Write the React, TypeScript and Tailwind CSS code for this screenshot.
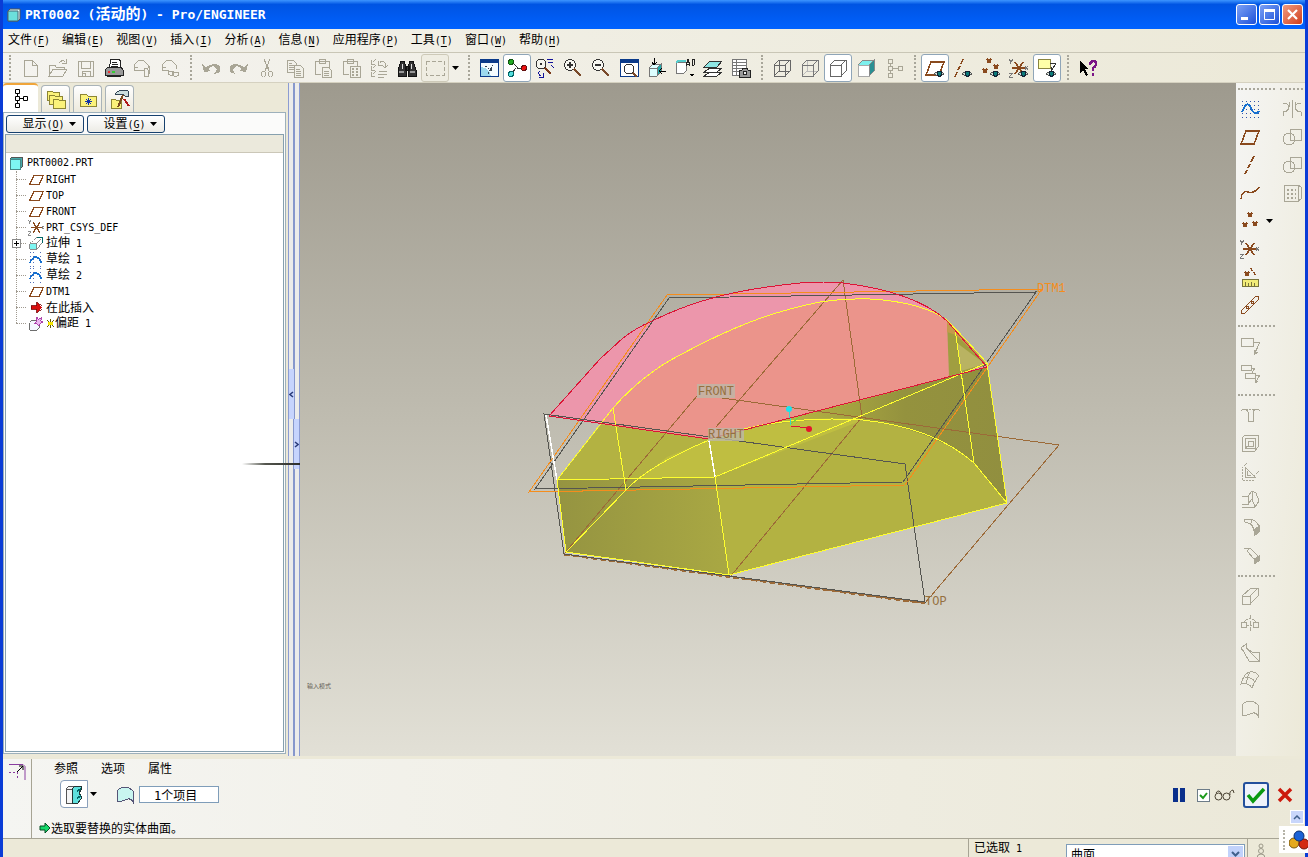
import type { ReactNode } from "react";

const G = "#a9a696";
const BR = "#8a4a1e";

// Latin characters are set half as wide as the Chinese ones
function Txt({ children }: { children: string }) {
    return (
        <>
            {children.split(/([\x20-\x7e]+)/).filter(Boolean).map((part, i) =>
                /^[\x20-\x7e]+$/.test(part) ? (
                    <span key={i} className="whitespace-pre font-['DejaVu_Sans_Mono',monospace] text-[10px]">{part}</span>
                ) : (
                    <span key={i}>{part}</span>
                )
            )}
        </>
    );
}

function Hot({ k }: { k: string }) {
    return (
        <span className="font-['DejaVu_Sans_Mono',monospace] text-[10px]">
            (<span className="underline underline-offset-2">{k}</span>)
        </span>
    );
}

function Ic({ children, c = G, fill = "none" }: { children: ReactNode; c?: string; fill?: string }) {
    return (
        <svg viewBox="0 0 20 20" className="size-5 shrink-0" fill={fill} stroke={c} strokeWidth="1" shapeRendering="crispEdges" aria-hidden="true">
            {children}
        </svg>
    );
}

function Eye() {
    return (
        <g>
            <path d="M9 16q5-5 10 0q-5 4-10 0z" fill="#d8e4dc" stroke="#555" />
            <circle cx="14.500" cy="15.800" r="2.500" fill="#0b7a78" stroke="#123" />
        </g>
    );
}

const Down = () => (
    <svg viewBox="0 0 7 4" className="h-1 w-[7px] shrink-0" aria-hidden="true"><path d="M0 0h7L3.500 4z" fill="#000" /></svg>
);

const CubeLines = ({ back }: { back?: ReactNode }) => (
    <>
        {back}
        <path d="M2 7h11v11H2zM2 7l5-5h11v11l-5 5M13 7l5-5" />
    </>
);

const fileTools = [
    { n: "新建", i: <Ic><path d="M4 2h8l5 5v11H4zM12 2v5h5" /></Ic> },
    { n: "打开", i: <Ic><path d="M1 18V7h6l1 2h8v2M1 18l4-7h14l-4 7zM11 5q3-4 6-1M18 1v4h-4" /></Ic> },
    { n: "保存", i: <Ic><path d="M2 3h15v15H2zM5 3v7h9V3M6 18v-5h8v5M6 15h3v3H6z" /></Ic> },
    { n: "打印", i: <Ic c="#222"><path d="M7 1h8l2 3-1 7H5z" fill="#fff" /><path d="M8 4h5M8 6h6M7 8h7" /><path d="M1 12l3-3h13l2 3v5H1z" fill="#999" /><path d="M4 14h2" stroke="#e33" strokeWidth="2" /><path d="M8 14h3" stroke="#3c3" strokeWidth="2" /><path d="M3 18h14" /></Ic> },
    { n: "附加到邮件", i: <Ic><path d="M2 12V7l5-5h4l5 5v3M2 12h10M2 9h4M17 8v8q0 3-3 3q-2 0-2-3v-4q0-2 2-2t2 2v5" /></Ic> },
    { n: "发送链接", i: <Ic><path d="M2 12V7l5-5h4l5 5v4M2 12h7M2 9h4" /><rect x="8" y="13" width="6" height="4" rx="2" /><rect x="12" y="14" width="7" height="4" rx="2" /></Ic> },
];

const editTools = [
    { n: "撤消", i: <Ic c="none" fill={G}><path d="M1 6l2 8 7-1-3-2q5-5 8-1q2 3-2 6q8-1 6-7q-4-6-14 0z" /></Ic> },
    { n: "重做", i: <Ic c="none" fill={G}><path d="M19 6l-2 8-7-1 3-2q-5-5-8-1q-2 3 2 6q-8-1-6-7q4-6 14 0z" /></Ic> },
    { n: "剪切", i: <Ic><path d="M7 1l5 12M13 1L8 13M11 9l1 3" /><ellipse cx="6.500" cy="16" rx="2" ry="3" /><ellipse cx="13.500" cy="16" rx="2" ry="3" /></Ic> },
    { n: "复制", i: <Ic><path d="M2 2h6l3 3v9H2zM4 5h3M4 7h5M4 9h5M4 11h5" /><path d="M9 7h6l3 3v9H9z" fill="#f1f0e8" /><path d="M11 11h4M11 13h5M11 15h5M11 17h5" /></Ic> },
    { n: "粘贴", i: <Ic><path d="M2 3h14v7M2 3v13h6M6 1h6v4H6z" /><path d="M9 9h6l3 3v7H9z" fill="#f1f0e8" /><path d="M11 13h5M11 15h5M11 17h5" /></Ic> },
    { n: "选择性粘贴", i: <Ic><path d="M2 3h14v5M2 3v13h6M6 1h6v4H6z" /><path d="M9 8h10v11H9z" fill="#f1f0e8" /><path d="M11 11h2M15 11h2M11 14h2M15 14h2M11 17h2M15 17h2" strokeWidth="2" /></Ic> },
    { n: "再生", i: <Ic><path d="M2 2v4h4M2 8v4h4M2 14v4h4M4 4l3-3M4 10l3-3M4 16l3-3M10 13h8M9 16h9M9 19h6M11 5q2-4 5 0v4M13 7l3 3 3-3M9 3v4h4" /></Ic> },
    { n: "查找", i: <Ic c="#111" fill="#333"><path d="M4 3h3l2 6v9H1v-6zM13 3h3l3 9v6h-8V9zM8 8h4v4H8z" /><path d="M5 6v5M14 6v5" stroke="#ddd" /><path d="M2 14h5M13 14h5" stroke="#999" strokeWidth="2" /></Ic> },
    { n: "选取框", box: true, i: <Ic><path d="M1 3h18v14H1z" strokeDasharray="4 2" /></Ic> },
];

const viewTools = [
    { n: "重画", i: <Ic c="#0a3a8a"><path d="M1 1h18v17H1z" fill="#f4fbff" /><path d="M1 3h18" strokeWidth="4" /><path d="M2 9q8 1 10 9H2z" fill="#9dd9ee" stroke="none" /><path d="M6 8l8 5M9 16l5-9" stroke="#345" strokeDasharray="2 1" /></Ic> },
    { n: "旋转中心", on: true, i: <Ic c="#333"><path d="M5 4l5 5v1h7M9 10l-4 5" /><circle cx="4" cy="4" r="2.500" fill="#2a2" stroke="#151" /><circle cx="17" cy="10" r="2.500" fill="#e11" stroke="#611" /><circle cx="4" cy="16" r="2.500" fill="#5dd" stroke="#066" /></Ic> },
    { n: "定向模式", i: <Ic c="#333"><circle cx="6" cy="6" r="5" fill="#f6f6ee" /><path d="M10 10l6 6" stroke="#7a3a1a" strokeWidth="2" /><path d="M6 5v2" strokeWidth="2" /><path d="M12 1h6M13 4h5M5 13q-3 3 1 5M4 19h4v-4M16 7l3 3" stroke="#119" /></Ic> },
    { n: "放大", i: <Ic c="#333"><circle cx="7" cy="7" r="5.500" fill="#f8f8f2" /><path d="M4 7h6M7 4v6" strokeWidth="2" /><path d="M11 11l7 7" stroke="#7a4a2a" strokeWidth="2" /></Ic> },
    { n: "缩小", i: <Ic c="#333"><circle cx="7" cy="7" r="5.500" fill="#f8f8f2" /><path d="M4 7h6" strokeWidth="2" /><path d="M11 11l7 7" stroke="#7a4a2a" strokeWidth="2" /></Ic> },
    { n: "重新调整", i: <Ic c="#0a3a8a"><path d="M1 1h18v17H1z" fill="#fff" /><path d="M1 3h18" strokeWidth="4" /><circle cx="10" cy="11" r="5" stroke="#333" fill="#fff" /><path d="M14 15l4 4" stroke="#7a4a2a" strokeWidth="2" /></Ic> },
    { n: "重定向视图", i: <Ic c="#777"><path d="M2 10l4-4h8v8l-4 4H2z" fill="#dff" /><path d="M10 10l4-4v8l-4 4z" fill="#2aa" /><path d="M2 10h8v8" /><path d="M7 0v6M5 4l2 3 3-3M19 13h-6M15 10l-3 3 3 3" stroke="#000" /></Ic> },
    { n: "视图列表", i: <Ic c="#777"><path d="M1 6l2-2h8v9l-2 2H1z" fill="#fff" /><path d="M1 5l2-2h8" stroke="#5cc" strokeWidth="2" /><path d="M11 8l2-7 2 7M12 6h2M17 1v6h2q2-1 0-3q2-1 0-3h-2" stroke="#222" /><path d="M14 16h5l-2 3z" fill="#000" stroke="none" /></Ic> },
    { n: "图层", i: <Ic c="#333"><path d="M1 18l6-4h12l-5 4zM1 14l6-4h12l-5 4z" fill="#fff" /><path d="M1 9l6-6h12l-5 6z" fill="#8ee6e4" /></Ic> },
    { n: "视图管理器", i: <Ic c="#777"><path d="M1 1h14v16H1z" fill="#fff" /><path d="M1 4h14M1 7h14M1 10h14M1 13h14M5 1v16" /><path d="M8 12h3l1-2h4l1 2h2v7H8z" fill="#999" stroke="#222" /><circle cx="14" cy="15" r="2" fill="#eee" stroke="#222" /></Ic> },
];

const displayTools = [
    { n: "线框", i: <Ic c="#666"><CubeLines back={<path d="M7 2v11h11M2 18l5-5" />} /></Ic> },
    { n: "隐藏线", i: <Ic c="#777"><CubeLines back={<path d="M7 2v11h11M2 18l5-5" stroke="#bbb" />} /></Ic> },
    { n: "消隐", on: true, i: <Ic c="#666"><CubeLines /></Ic> },
    { n: "着色", i: <Ic c="#888"><path d="M2 7l5-5h11v11l-5 5H2z" fill="#7df0ee" /><path d="M2 7h11v11H2z" fill="#fff" stroke="#aaa" /><path d="M13 7l5-5v11l-5 5z" fill="#2a8f92" /></Ic> },
    { n: "模型树", i: <Ic><path d="M4 1h4v4H4zM4 8h4v4H4zM4 15h4v4H4zM14 8h4v4h-4zM6 5v3M6 12v3M8 10h6" /></Ic> },
];

const Plane = () => <path d="M1 17L6 4h13l-5 13z" stroke={BR} strokeWidth="1.500" />;
const XXX = () => <path d="M6 1l4 4M10 1L6 5M2 11l4 4M6 11l-4 4M13 7l4 4M17 7l-4 4" stroke={BR} strokeWidth="1.500" />;
const Csys = () => (
    <>
        <path d="M3 10h13M6 4l8 12M14 4L6 16" stroke={BR} strokeWidth="1.500" />
        <path d="M0 1l2 3M4 1L1 6M0 15h4l-4 4h4M16 8l3 4M19 8l-3 4" stroke="#777" />
    </>
);

const datumTools = [
    { n: "基准平面显示", on: true, i: <Ic><Plane /><Eye /></Ic> },
    { n: "基准轴显示", i: <Ic><path d="M10 1L8 6M7 8l-2 4M4 14l-2 5" stroke={BR} strokeWidth="1.500" /><Eye /></Ic> },
    { n: "基准点显示", i: <Ic><XXX /><Eye /></Ic> },
    { n: "坐标系显示", i: <Ic><Csys /><Eye /></Ic> },
    { n: "注释显示", on: true, i: <Ic><path d="M1 1h12v9H1z" fill="#ffffa8" stroke="#8a8540" /><path d="M13 5h6l-4 7M14 9v4h3" stroke="#333" /><Eye /></Ic> },
];

const helpTools = [
    { n: "上下文帮助", i: <Ic><path d="M2 3v12l3-3 3 6 2-1-3-6h4z" fill="#000" stroke="none" /><path d="M12 7q0-4 3-4q4 0 3 4q-1 2-3 3v3M15 15v3" stroke="#7b1586" strokeWidth="2.500" /></Ic> },
];

type Tool = { n: string; i: ReactNode; on?: boolean; box?: boolean };

function ToolGroup({ tools }: { tools: Tool[] }) {
    return (
        <div className="flex">
            {tools.map((t) => (
                <button
                    key={t.n}
                    type="button"
                    aria-label={t.n}
                    className={
                        "flex size-7 items-center justify-center rounded-[3px] border " +
                        (t.on ? "border-[#8fa5b8] bg-white" : t.box ? "border-[#cdc9b8] bg-[#efede2]" : "border-transparent")
                    }
                >
                    {t.i}
                </button>
            ))}
        </div>
    );
}

const Grip = () => (
    <div className="flex w-[13px] shrink-0 justify-center">
        <div className="h-[25px] border-l-2 border-dotted border-[#a8a69a]" />
    </div>
);

const menus = [
    ["文件", "F"], ["编辑", "E"], ["视图", "V"], ["插入", "I"], ["分析", "A"],
    ["信息", "N"], ["应用程序", "P"], ["工具", "T"], ["窗口", "W"], ["帮助", "H"],
];

const TreePlane = () => <Ic><path d="M2 16L7 5h11l-5 11z" stroke={BR} strokeWidth="1.500" /></Ic>;
const TreeSketch = () => (
    <Ic>
        <path d="M2 2h15M2 6h15M2 10h15M2 14h15M2 18h15" stroke="#3355aa" strokeDasharray="1 3" />
        <path d="M2 14q7-14 14 0" stroke="#1670d0" strokeWidth="1.800" />
    </Ic>
);

const tree = [
    { t: "RIGHT", i: <TreePlane /> },
    { t: "TOP", i: <TreePlane /> },
    { t: "FRONT", i: <TreePlane /> },
    { t: "PRT_CSYS_DEF", i: <Ic><Csys /></Ic> },
    { t: "拉伸 1", plus: true, i: <Ic c="#777"><path d="M2 10h8v7H2z" fill="#7df5f2" /><path d="M2 10l8-7M10 17l7-8M10 10l5-5" strokeDasharray="2 1" /><path d="M11 3h6v6" stroke="#066" strokeWidth="1.500" /></Ic> },
    { t: "草绘 1", i: <TreeSketch /> },
    { t: "草绘 2", i: <TreeSketch /> },
    { t: "DTM1", i: <TreePlane /> },
    { t: "在此插入", i: <Ic><path d="M4 8h6V4l7 6-7 6v-4H4z" fill="#d80f0f" stroke="#7a0808" /></Ic> },
    { t: "偏距 1", star: true, i: <Ic c="#555"><path d="M2 9l3-3h8v9l-3 3H2z" fill="#f4f6ff" /><path d="M10 2l2 3 4-2-1 4 3 1-4 2-1 3-2-3-3 0 2-3z" fill="#e9b6f0" stroke="#a0289c" /></Ic> },
];

const sideMain: Tool[][] = [
    [
        { n: "草绘", i: <Ic><path d="M2 2h17M2 6h17M2 10h17M2 14h17M2 18h17" stroke="#3355aa" strokeDasharray="1 3" /><path d="M2 13q5-13 9-4t8 3" stroke="#1670d0" strokeWidth="1.800" /></Ic> },
        { n: "平面", i: <Ic><Plane /></Ic> },
        { n: "轴", i: <Ic><path d="M14 1l-3 6M10 9l-2 4M7 15l-2 4" stroke={BR} strokeWidth="1.500" /></Ic> },
        { n: "曲线", i: <Ic><path d="M1 16q1-9 7-7t11-5" stroke={BR} strokeWidth="1.500" /></Ic> },
        { n: "点", i: <Ic><path d="M8 2l4 4M12 2L8 6M3 12l4 4M7 12l-4 4M13 11l4 4M17 11l-4 4" stroke={BR} strokeWidth="1.500" /></Ic> },
        { n: "坐标系", i: <Ic><Csys /></Ic> },
        { n: "分析特征", i: <Ic><path d="M5 5l4 4M9 5L5 9M11 1l1 3M14 5l1 3" stroke={BR} strokeWidth="1.500" /><path d="M2 12h16v7H2z" fill="#f2ec78" stroke="#77743a" /><path d="M5 15v4M8 16v3M11 15v4M14 16v3" stroke="#77743a" /></Ic> },
        { n: "参照", i: <Ic c={BR}><ellipse cx="15" cy="5" rx="5" ry="2.500" transform="rotate(-45 15 5)" /><ellipse cx="10" cy="10" rx="5" ry="2.500" transform="rotate(-45 10 10)" /><ellipse cx="5" cy="15" rx="5" ry="2.500" transform="rotate(-45 5 15)" /></Ic> },
    ],
    [
        { n: "注释", i: <Ic><path d="M1 2h12v8H1zM13 6h7l-6 13M14 14v5l4-3" /></Ic> },
        { n: "注释特征", i: <Ic><path d="M1 1h10v5H1zM5 9h10v5H5zM11 4h4l-3 5M15 11h5l-5 8M15 15v4l3-2" /></Ic> },
    ],
    [
        { n: "孔", i: <Ic><path d="M1 6l2-2h3l2 3v9h5V7l2-3h3l2 2" /><path d="M6 4h10" strokeDasharray="2 1" /></Ic> },
        { n: "壳", i: <Ic><path d="M2 5l3-3h13v12l-3 4H2zM2 5h1M5 5h10v10H5zM8 8h5v5H8zM5 15l3-2" /></Ic> },
        { n: "筋", i: <Ic><path d="M5 6v10h10zM7 10v4h4" /><path d="M2 8v11h13M2 7l5-5M14 15l5-5" strokeDasharray="2 1" /></Ic> },
        { n: "拔模", i: <Ic><path d="M2 7h6v8H2M8 7l4-5 4 2 3 8-4 6H2M12 2v8l3 8M8 15l4-5" /></Ic> },
        { n: "倒圆角", i: <Ic><path d="M4 2h7q7 2 8 9M4 2q0 4 4 4q5 1 6 8M8 2q4 0 4 4" /><path d="M14 13l5-4v6l-5 4z" fill={G} /></Ic> },
        { n: "倒角", i: <Ic><path d="M4 3h6l9 9M7 6l7 8M4 3h4M10 3l-3 3" /><path d="M14 14l5-3v5l-5 3z" fill={G} /></Ic> },
    ],
    [
        { n: "拉伸", i: <Ic><path d="M2 10h8v8H2zM2 10l9-8h7v8l-8 8M10 10l8-8" /></Ic> },
        { n: "旋转", i: <Ic><circle cx="4" cy="11" r="3" /><circle cx="16" cy="11" r="3" /><path d="M10 1v18" strokeDasharray="4 2" /><path d="M4 8q6-7 12 0M7 11h6" strokeDasharray="2 1" /></Ic> },
        { n: "可变剖面扫描", i: <Ic><path d="M1 6l5-4v4l6 4h7v9H9L4 10zM1 6l3 4M6 6l13 13" /></Ic> },
        { n: "边界混合", i: <Ic><path d="M1 14q3-11 9-12 5-1 9 4-4 4-7 12-4-6-11-4zM5 8q6-2 10 4M10 2q-4 6-3 12" /></Ic> },
        { n: "造型", i: <Ic><path d="M2 18V7q8-8 16 0v11q-3-5-8-2-4 2-8 2z" /></Ic> },
    ],
];

const sideMore: Tool[] = [
    { n: "镜像", i: <Ic><path d="M10 1v18" /><path d="M7 3v5q-1 5-6 5v4M13 3v5q1 5 6 5v4M1 4q5 0 6 4M19 4q-5 0-6 4" /></Ic> },
    { n: "合并", i: <Ic><circle cx="7" cy="12" r="6" /><path d="M8 2h11v11H8z" /></Ic> },
    { n: "修剪", i: <Ic><circle cx="7" cy="12" r="6" /><path d="M8 2h11v11H8z" /></Ic> },
    { n: "阵列", i: <Ic><path d="M2 2h14v16H2zM16 2l3 2v12l-3 2" /><path d="M5 7h9M5 11h9M5 15h9" strokeWidth="2" strokeDasharray="2 2" /></Ic> },
];

const SideGrip = () => (
    <div className="flex h-[13px] items-center px-0.5">
        <div className="w-full border-t-2 border-dotted border-[#a9a79b]" />
    </div>
);

function Scene() {
    return (
        <svg viewBox="300 83 936 673" className="absolute inset-0 size-full" fill="none" aria-label="模型">
            <defs>
                <linearGradient id="left" x1="0" x2="1"><stop offset="0" stopColor="#959441" /><stop offset="1" stopColor="#a9a843" /></linearGradient>
                <linearGradient id="back" x1="0" x2="1"><stop offset="0" stopColor="#b8b643" /><stop offset=".55" stopColor="#94923e" /><stop offset="1" stopColor="#918f3f" /></linearGradient>
            </defs>

            {/* solid body */}
            <path d="M557 480L614 408 709 439 987 367 1007 503 729 575 566 552z" fill="#b3b242" />
            <path d="M780 422Q830 415 863 420C915 427 950 443 974 463L1007 503 987 367z" fill="url(#back)" />
            <path d="M715 477L626 490 667 457 709 440Q780 416 863 420z" fill="#bfbe41" />
            <path d="M557 480L715 477 729 575 566 552z" fill="url(#left)" />

            {/* picked surface */}
            <path d="M549 416L600 359 623 338Q636 328 650 322C690 302 730 290 800 283Q825 281 843 283C885 288 925 300 947 321L967 344 987 367 709 439z" fill="#ec96ab" />
            <path d="M600 424L613 408Q643 374 680 355C730 328 770 312 820 302Q845 298 870 299C905 301 930 308 947 320L949 377 709 439z" fill="#eb948b" />
            <path d="M947 321L967 341 987 365 949 377z" fill="#a09e40" />
            <path d="M947 321L967 341 987 365 956 335 947 332z" fill="#c59a4c" />
            <path d="M957 343L985 364 961 371z" fill="#b9b362" />

            <g shapeRendering="crispEdges">
                <path d="M564 554L697 396M722 398L1059 445 925 603 564 554M716 427L843 280 862 417 730 577M729 575L715 477" stroke="#9c6a38" />
                <path d="M544 414L905 464 925 602 564 554zM535 489L669 298 1036 292 903 482z" stroke="#555550" />
                <path d="M564 555L925 604" stroke="#9c6a38" strokeDasharray="6 3" />
                <path d="M529 492L667 295 1042 289 905 485z" stroke="#f58d1c" />
                <path d="M546 415L557 480M709 440L715 477" stroke="#fff" strokeWidth="1.500" />
                <g stroke="#ffff2e">
                    <path d="M557 480L613 408Q643 374 680 355C730 328 770 312 820 302Q845 298 870 299C905 301 930 308 947 320L967 341 987 363 1007 503 729 575 566 552z" />
                    <path d="M557 480L715 477 987 363M715 477L729 575M613 408L626 490M955 329L974 463" />
                    <path d="M566 552L626 490Q648 466 709 440C750 424 800 416 863 420 910 425 948 440 974 463L1007 503" />
                </g>
                <path d="M549 416L600 359 623 338Q636 328 650 322C690 302 730 290 800 283Q825 281 843 283C885 288 925 300 947 321L967 344 987 367 709 439z" stroke="#dc1436" />

                {/* spin centre */}
                <path d="M789 410L791 425" stroke="#3fd8c8" />
                <path d="M791 424L800 416" stroke="#6cdc3c" />
                <path d="M791 426L808 428" stroke="#dc1436" />
            </g>
            <circle cx="789" cy="409" r="3" fill="#19e4ee" />
            <circle cx="809" cy="429" r="3" fill="#e5142e" />

            <path d="M697 384h38v14h-38zM708 428h36v13h-36z" fill="#bdb8a8" fillOpacity=".8" />
            <g fontFamily="Liberation Mono, monospace" fontSize="12" fill="#95703f">
                <text x="698" y="395">FRONT</text>
                <text x="708" y="438">RIGHT</text>
                <text x="925" y="605">TOP</text>
                <text x="1037" y="292" fill="#f58d1c">DTM1</text>
            </g>
            <text x="307" y="688" fontFamily="Noto Sans CJK SC, sans-serif" fontSize="6" fill="#5f5d54">输入模式</text>
        </svg>
    );
}

function TitleBar() {
    return (
        <header className="flex h-[29px] shrink-0 items-center gap-1 bg-linear-to-b from-[#3d95ff] via-[#0054e3] via-15% to-[#0062ff] pr-0.5 pl-1 text-white">
            <svg viewBox="0 0 14 14" className="size-3.5 shrink-0" aria-hidden="true">
                <path d="M1 3l2-2h10v10l-2 2H1z" fill="#dff" stroke="#555" />
                <path d="M1 3h10v10H1z" fill="#6be0dc" stroke="#467" />
            </svg>
            <h1 className="flex-1 whitespace-pre font-['DejaVu_Sans_Mono','Noto_Sans_CJK_SC',monospace] text-[13px] leading-4 font-bold">
                PRT0002 (<span className="text-[15px]">活动的</span>) - Pro/ENGINEER
            </h1>
            <div className="flex gap-0.5">
                <button type="button" aria-label="最小化" className="flex size-[21px] rounded-[3px] border border-white bg-linear-to-br from-[#7ca0f5] to-[#1c4fd8]">
                    <svg viewBox="0 0 19 19" aria-hidden="true"><path d="M4 12h7v3H4z" fill="#fff" /></svg>
                </button>
                <button type="button" aria-label="最大化" className="flex size-[21px] rounded-[3px] border border-white bg-linear-to-br from-[#7ca0f5] to-[#1c4fd8]">
                    <svg viewBox="0 0 19 19" aria-hidden="true"><path d="M4.500 5.500h10v9h-10z" fill="none" stroke="#fff" /><path d="M4 4h11v3H4z" fill="#fff" /></svg>
                </button>
                <button type="button" aria-label="关闭" className="flex size-[21px] rounded-[3px] border border-white bg-linear-to-br from-[#f09a80] to-[#cf3a12]">
                    <svg viewBox="0 0 19 19" aria-hidden="true"><path d="M5 5l9 9M14 5l-9 9" stroke="#fff" strokeWidth="2.200" /></svg>
                </button>
            </div>
        </header>
    );
}

const Folder = ({ d = "M2 5h6l2 2h8v10H2z" }: { d?: string }) => <path d={d} fill="#fbf27a" stroke="#8c8534" />;

const navTabs = [
    { n: "文件夹浏览器", i: <Ic><Folder d="M1 2h5l1 1h6v8H1z" /><Folder d="M3 6h5l1 1h7v8H3z" /><Folder d="M7 10h5l1 1h6v8H7z" /></Ic> },
    { n: "收藏夹", i: <Ic><Folder /><path d="M10 9v7M7 12h7M8 10l5 5M13 10l-5 5" stroke="#1133aa" /></Ic> },
    { n: "连接", i: <Ic><Folder d="M1 10h4l1 1h5v8H1z" /><path d="M5 5q3-5 13-3v5h-3l-2-2-6 1z" fill="#cdd" stroke="#345" /><path d="M13 6L8 18" stroke="#7a4a1e" strokeWidth="2" /><path d="M14 10l5 7" stroke="#b01818" strokeWidth="2" /></Ic> },
];

function Navigator() {
    return (
        <aside className="flex w-[285px] shrink-0 flex-col pr-0.5">
            <div className="flex h-[29px] items-end gap-[3px]">
                <button type="button" aria-label="模型树" className="flex h-full w-[35px] items-center justify-center rounded-t border-t-2 border-[#f0a53a] bg-white">
                    <svg viewBox="0 0 20 20" className="size-5" fill="none" stroke="#000" aria-hidden="true">
                        <path d="M4.500 .5h4v4h-4zM4.500 7.500h4v4h-4zM4.500 14.500h4v4h-4zM12.500 7.500h4v4h-4zM6.500 5v2M6.500 12v2M9 9.500h3" />
                    </svg>
                </button>
                {navTabs.map((t) => (
                    <button key={t.n} type="button" aria-label={t.n} className="flex h-[27px] w-[29px] items-center justify-center rounded-t border border-b-0 border-[#a9b3b8] bg-linear-to-b from-white to-[#ece9dc]">
                        {t.i}
                    </button>
                ))}
            </div>
            <div className="mb-0.5 flex flex-1 flex-col border border-[#9db0bb] bg-[#fbfbfa] p-px">
                <div className="flex gap-[3px] pt-px pb-px pl-px">
                    {[["显示", "O"], ["设置", "G"]].map(([t, k]) => (
                        <button key={t} type="button" className="flex h-[18px] w-[78px] items-center justify-center gap-1 rounded-[3px] border border-[#17416e] bg-linear-to-b from-white to-[#ecebe5] pl-2 leading-4">
                            <span>{t}<Hot k={k} /></span>
                            <Down />
                        </button>
                    ))}
                </div>
                <div className="flex flex-1 flex-col border border-[#86a0ae] bg-white">
                    <div className="mb-0.5 h-[18px] border-b border-[#cbc7b8] bg-[#ebe9dc]" />
                    <div className="flex h-4 items-center gap-1 pl-[3px]">
                        <svg viewBox="0 0 14 14" className="size-3.5" shapeRendering="crispEdges" aria-hidden="true">
                            <path d="M1 3l2-2h10v10l-2 2H1z" fill="#4aa" stroke="#555" />
                            <path d="M1 3h10v10H1z" fill="#7df5f2" stroke="#488" />
                        </svg>
                        <Txt>PRT0002.PRT</Txt>
                    </div>
                    <ul className="relative ml-2.5 before:absolute before:top-0 before:bottom-2 before:left-0 before:border-l before:border-dotted before:border-[#a09a90]">
                        {tree.map((n) => (
                            <li key={n.t} className="flex h-4 items-center">
                                <span className="w-2.5 border-t border-dotted border-[#a09a90]" />
                                {n.plus && (
                                    <button type="button" aria-label="展开" className="absolute -left-1 flex size-[9px] items-center justify-center border border-[#888] bg-white">
                                        <svg viewBox="0 0 7 7" className="size-[7px]" aria-hidden="true"><path d="M1 3.500h5M3.500 1v5" stroke="#000" /></svg>
                                    </button>
                                )}
                                <span className="flex h-4 w-5 items-center justify-center [&>svg]:size-[17px]">{n.i}</span>
                                {n.star && (
                                    <svg viewBox="0 0 9 9" className="size-[9px]" aria-hidden="true"><path d="M1 1l7 7M8 1L1 8M4.500 0v9" stroke="#665c00" /><path d="M2 3h5v3H2z" fill="#f5e800" /></svg>
                                )}
                                <span className="whitespace-nowrap"><Txt>{n.t}</Txt></span>
                            </li>
                        ))}
                    </ul>
                </div>
            </div>
        </aside>
    );
}

function Splitter() {
    return (
        <div className="relative flex w-3 shrink-0 border-x border-[#8c9cd2] bg-[#ececea]">
            <div className="mx-auto w-0.5 bg-[#8798cc]" />
            <button type="button" aria-label="收起" className="absolute top-[286px] left-0 flex h-[50px] w-[5px] items-center bg-[#c6d4fd]">
                <svg viewBox="0 0 5 7" className="w-[5px]" fill="none" aria-hidden="true"><path d="M4 1L1 3.500 4 6" stroke="#2a3c7a" strokeWidth="1.500" /></svg>
            </button>
            <button type="button" aria-label="展开" className="absolute top-[336px] right-0 flex h-[50px] w-[5px] items-center bg-[#c6d4fd]">
                <svg viewBox="0 0 5 7" className="w-[5px]" fill="none" aria-hidden="true"><path d="M1 1l3 2.500L1 6" stroke="#2a3c7a" strokeWidth="1.500" /></svg>
            </button>
            <div className="absolute top-[380px] -right-px h-0.5 w-[58px] bg-linear-to-r from-transparent via-[#55574f] via-40% to-[#2c2d2a]" />
        </div>
    );
}

function SideBar() {
    return (
        <nav aria-label="特征" className="flex w-[69px] shrink-0 justify-between bg-linear-to-br from-[#f5f5f3] to-[#ece9d8]">
            <div className="w-[41px]">
                {sideMain.map((group, g) => (
                    <div key={g} className="first:-mt-px">
                        <SideGrip />
                        {group.map((t) => (
                            <div key={t.n} className="flex items-center gap-0.5">
                                <button type="button" aria-label={t.n} className="flex size-7 items-center justify-center">{t.i}</button>
                                {t.n === "点" && <Down />}
                            </div>
                        ))}
                    </div>
                ))}
            </div>
            <div className="-mt-px w-[27px]">
                <SideGrip />
                {sideMore.map((t) => (
                    <button key={t.n} type="button" aria-label={t.n} className="flex h-7 w-full items-center justify-center">{t.i}</button>
                ))}
            </div>
        </nav>
    );
}

function Dashboard() {
    return (
        <section className="mt-[3px] flex h-20 shrink-0 border-b border-[#a7a494] bg-linear-to-r from-[#f5f5f2] to-[#ebe8d8]">
            <div className="flex w-[29px] justify-center border-r border-[#a7a494] pt-1">
                <svg viewBox="0 0 18 18" className="size-[18px]" fill="none" aria-hidden="true">
                    <path d="M1 1.500h14l2 2V17" stroke="#8a3ea0" />
                    <path d="M1 9.500h8M9.500 9v8" stroke="#8a3ea0" strokeDasharray="2 2" />
                    <path d="M9 9l6-6M11 3h4v4" stroke="#000" />
                </svg>
            </div>
            <div className="flex flex-1 flex-col pl-[7px]">
                <div className="flex gap-[23px] pt-px pl-[15px]">
                    {["参照", "选项", "属性"].map((t) => (
                        <button key={t} type="button" className="leading-4">{t}</button>
                    ))}
                </div>
                <div className="flex items-center pt-1 pl-[21px]">
                    <button type="button" aria-label="替换曲面特征" className="flex size-7 items-center justify-center rounded-l border border-[#8aa0bb] bg-white">
                        <Ic c="#555">
                            <path d="M2 5l3-3h6v14l-3 3H2z" fill="#f4f4f4" />
                            <path d="M2 5h6v14" />
                            <path d="M8 5l3-3h6v4l-2 3 2 3v3l-3 4H8z" fill="#5fe0dd" stroke="#233" />
                            <path d="M13 7l4-2M13 14l4-2" stroke="#066" strokeWidth="2" />
                        </Ic>
                    </button>
                    <button type="button" aria-label="选项列表" className="ml-0.5"><Down /></button>
                    <span className="ml-[18px] flex"><Ic c="#557"><path d="M2 18V7q8-8 16 0v11q-3-5-8-2-4 2-8 2z" fill="#c8f5f0" /></Ic></span>
                    <input
                        aria-label="替换曲面"
                        defaultValue="1个项目"
                        className="ml-1 h-[17px] w-20 border border-[#7f9db9] bg-white pl-3.5 font-['DejaVu_Sans_Mono','Noto_Sans_CJK_SC',monospace] text-xs"
                    />
                </div>
                <p className="mt-auto mb-0.5 flex items-center leading-4">
                    <svg viewBox="0 0 12 12" className="size-3" aria-hidden="true"><path d="M1 4h5V1l5 5-5 5V8H1z" fill="#16d86a" stroke="#054d22" /></svg>
                    选取要替换的实体曲面。
                </p>
            </div>
            <div className="mt-[18px] mr-3 flex h-9 items-center">
                <button type="button" aria-label="暂停" className="flex gap-0.5">
                    <span className="h-3.5 w-[5px] bg-[#0a2f8c]" />
                    <span className="h-3.5 w-[5px] bg-[#0a2f8c]" />
                </button>
                <label className="ml-3 flex items-center gap-1">
                    <span className="relative flex">
                        <input type="checkbox" defaultChecked aria-label="预览" className="peer size-[13px] appearance-none border border-[#6d7c88] bg-white" />
                        <svg viewBox="0 0 13 13" className="pointer-events-none absolute inset-0 hidden size-[13px] peer-checked:block" fill="none" aria-hidden="true"><path d="M3 6l3 3 4-5" stroke="#1c9a1c" strokeWidth="2" /></svg>
                    </span>
                    <svg viewBox="0 0 21 12" className="h-3 w-[21px]" fill="none" stroke="#4a4232" aria-hidden="true">
                        <circle cx="4.500" cy="7.500" r="3.500" />
                        <circle cx="12.500" cy="7.500" r="3.500" />
                        <path d="M2 4q3-5 6 2M16 6q-1-4 3-5l1 3" />
                    </svg>
                </label>
                <button type="button" aria-label="确定" className="ml-2 flex size-[26px] items-center justify-center rounded-[3px] border-2 border-[#224f9c] bg-[#eef2fb]">
                    <svg viewBox="0 0 20 18" className="w-5" fill="none" aria-hidden="true"><path d="M2 9l5 6L18 3" stroke="#0a9a12" strokeWidth="3.500" /></svg>
                </button>
                <button type="button" aria-label="取消" className="ml-2 flex">
                    <svg viewBox="0 0 16 16" className="size-4" aria-hidden="true"><path d="M2 2l12 12M14 2L2 14" stroke="#cc1a0c" strokeWidth="3.500" /></svg>
                </button>
            </div>
        </section>
    );
}

function StatusBar() {
    return (
        <footer className="flex h-[18px] shrink-0 items-start overflow-hidden">
            <div className="ml-auto flex h-full w-[98px] items-center border-l border-[#a7a494] pl-[5px] leading-4">
                <span className="whitespace-nowrap"><Txt>已选取 1</Txt></span>
            </div>
            <div className="relative mt-[5px] h-5 w-[179px]">
                <select aria-label="过滤器" className="h-5 w-full appearance-none border border-[#7f9db9] bg-white pl-1 text-xs leading-4">
                    <option>曲面</option>
                </select>
                <span className="pointer-events-none absolute top-0.5 right-0.5 flex h-4 w-[15px] items-center justify-center bg-[#c1d2fb]">
                    <svg viewBox="0 0 9 6" className="w-[9px]" fill="none" aria-hidden="true"><path d="M1 1l3.500 3.500L8 1" stroke="#40608c" strokeWidth="2" /></svg>
                </span>
            </div>
            <div className="ml-0.5 flex h-full w-[58px] border-l border-[#a7a494] pt-1 pl-2">
                <svg viewBox="0 0 10 16" className="h-4 w-2.5" fill="none" stroke="#9c998a" aria-hidden="true">
                    <circle cx="5" cy="3" r="2" />
                    <circle cx="5" cy="8" r="2.500" />
                    <path d="M1 15q0-4 4-4t4 4" />
                </svg>
            </div>
        </footer>
    );
}

export default function App() {
    return (
        <div className="relative overflow-hidden font-['Noto_Sans_CJK_SC',sans-serif] text-xs leading-4 text-black">
            <div className="flex min-h-screen flex-col border-x-[3px] border-[#0a3cd6] bg-[#ece9d8]">
                <TitleBar />
                <nav aria-label="菜单" className="flex h-[23px] shrink-0 items-start gap-3 bg-linear-to-r from-[#f3f2ec] to-[#ece9d8] pt-0.5 pl-[5px]">
                    {menus.map(([t, k]) => (
                        <button key={t} type="button" className="whitespace-nowrap leading-4">{t}<Hot k={k} /></button>
                    ))}
                </nav>
                <div className="flex h-[31px] shrink-0 items-center border-y border-t-[#c9c6b6] border-b-[#d5d1c0] bg-linear-to-r from-[#f4f3ef] to-[#ece9d8]">
                    <Grip />
                    <ToolGroup tools={fileTools} />
                    <Grip />
                    <ToolGroup tools={editTools} />
                    <button type="button" aria-label="选取方式" className="flex w-[13px] items-center justify-center"><Down /></button>
                    <Grip />
                    <ToolGroup tools={viewTools} />
                    <Grip />
                    <ToolGroup tools={displayTools} />
                    <Grip />
                    <ToolGroup tools={datumTools} />
                    <Grip />
                    <ToolGroup tools={helpTools} />
                </div>
                <div className="flex flex-1">
                    <Navigator />
                    <Splitter />
                    <main className="relative flex-1 bg-linear-to-b from-[#9e9a8e] via-[#bfbcb0] to-[#e2e0d6]">
                        <Scene />
                    </main>
                    <SideBar />
                </div>
                <Dashboard />
                <StatusBar />
            </div>
            <button type="button" aria-label="展开工具栏" className="absolute right-1 bottom-[33px] flex size-3.5 items-center justify-center border border-white bg-[#c8d6fb]">
                <svg viewBox="0 0 8 5" className="w-2" fill="none" aria-hidden="true"><path d="M1 4l3-3 3 3" stroke="#40608c" strokeWidth="1.500" /></svg>
            </button>
            <div className="absolute right-0 bottom-1 flex h-[27px] w-[29px] items-center gap-1 overflow-hidden bg-white pl-1">
                <span className="h-5 border-l-2 border-dotted border-[#b5b3a8]" />
                <svg viewBox="0 0 20 20" className="size-5 shrink-0" aria-hidden="true">
                    <circle cx="5" cy="13" r="5" fill="#e5a91c" stroke="#7a560a" />
                    <circle cx="15" cy="14" r="5" fill="#d32a12" stroke="#6d1208" />
                    <circle cx="10" cy="6" r="5" fill="#1b62d6" stroke="#0b2f70" />
                </svg>
            </div>
        </div>
    );
}
